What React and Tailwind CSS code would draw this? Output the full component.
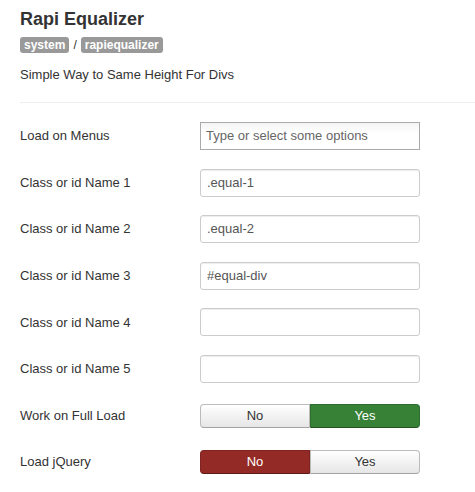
import React from "react"

const font = { fontFamily: '"Liberation Sans", Arial, sans-serif' }

function TextRow({ label, value, placeholder, select }) {
  return (
    <div className="flex items-center h-[28px]">
      <label className="w-[180px] text-[13px] text-[#333]">{label}</label>
      {select ? (
        <div className="w-[220px] h-[28px] border border-[#aaa] bg-white flex items-center px-[5px] text-[13px] text-[#666]"
          style={{ backgroundImage: "linear-gradient(#f4f4f4 0%, #fff 40%)" }}>
          {placeholder}
        </div>
      ) : (
        <div className="w-[220px] h-[28px] border border-[#ccc] rounded-[3px] bg-white flex items-center px-[6px] text-[13px] text-[#555] shadow-[inset_0_1px_1px_rgba(0,0,0,0.075)]">
          {value}
        </div>
      )}
    </div>
  )
}

function Toggle({ label, active }) {
  const off = "bg-gradient-to-b from-white to-[#e6e6e6] text-[#333] border border-[#bbb] border-b-[#a2a2a2]"
  return (
    <div className="flex items-center h-[28px]">
      <label className="w-[180px] text-[13px] text-[#333]">{label}</label>
      <div className="flex w-[220px] h-[24px] text-[13px]">
        {active === "yes" ? (
          <>
            <div className={`w-[110px] flex items-center justify-center rounded-l-[4px] ${off}`}>No</div>
            <div className="w-[110px] flex items-center justify-center rounded-r-[4px] bg-[#378137] border border-[#2f6e2f] border-b-[#235223] text-white">Yes</div>
          </>
        ) : (
          <>
            <div className="w-[110px] flex items-center justify-center rounded-l-[4px] bg-[#942a25] border border-[#7f2420] border-b-[#5e1a17] text-white">No</div>
            <div className={`w-[110px] flex items-center justify-center rounded-r-[4px] ${off}`}>Yes</div>
          </>
        )}
      </div>
    </div>
  )
}

export default function App() {
  return (
    <div className="w-[475px] h-[492px] bg-white pl-[20px] pt-[7px] overflow-hidden" style={font}>
      <h1 className="text-[18px] leading-[24px] font-bold text-[#333]">Rapi Equalizer</h1>
      <div className="flex items-center gap-[4px] mt-[6px] h-[16px] leading-[16px] text-[12px] text-[#333]">
        <span className="bg-[#999] text-white font-bold rounded-[3px] px-[4px] h-[16px] leading-[16px]">system</span>
        <span>/</span>
        <span className="bg-[#999] text-white font-bold rounded-[3px] px-[4px] h-[16px] leading-[16px]">rapiequalizer</span>
      </div>
      <p className="text-[13px] text-[#333] mt-[13px] leading-[18px]">Simple Way to Same Height For Divs</p>
      <div className="mt-[18px] border-t border-[#eee]" />
      <div className="flex flex-col gap-[18.6px] mt-[19px]">
        <TextRow label="Load on Menus" placeholder="Type or select some options" select />
        <TextRow label="Class or id Name 1" value=".equal-1" />
        <TextRow label="Class or id Name 2" value=".equal-2" />
        <TextRow label="Class or id Name 3" value="#equal-div" />
        <TextRow label="Class or id Name 4" value="" />
        <TextRow label="Class or id Name 5" value="" />
        <Toggle label="Work on Full Load" active="yes" />
        <Toggle label="Load jQuery" active="no" />
      </div>
    </div>
  )
}
